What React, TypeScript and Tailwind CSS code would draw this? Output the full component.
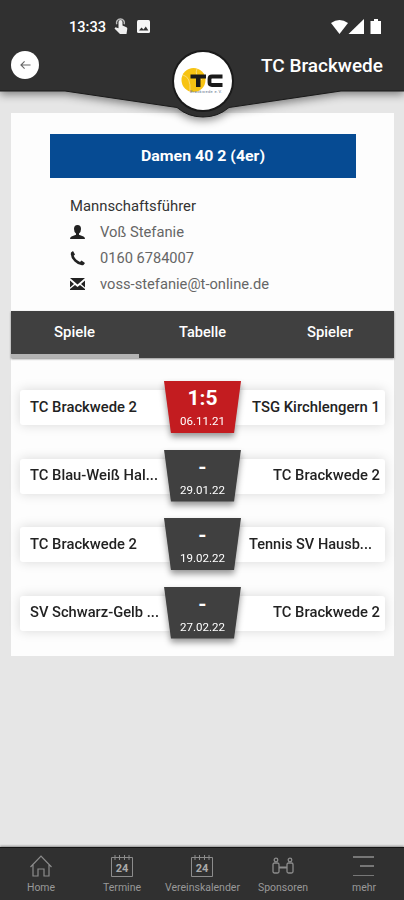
import React from "react";

const FONT = "font-['Roboto','Liberation_Sans',sans-serif]";

type Match = {
  home: string;
  guest: string;
  score: string;
  date: string;
  lost?: boolean;
};

const matches: Match[] = [
  { home: "TC Brackwede 2", guest: "TSG Kirchlengern 1", score: "1:5", date: "06.11.21", lost: true },
  { home: "TC Blau-Weiß Hal...", guest: "TC Brackwede 2", score: "-", date: "29.01.22" },
  { home: "TC Brackwede 2", guest: "Tennis SV Hausb...", score: "-", date: "19.02.22" },
  { home: "SV Schwarz-Gelb ...", guest: "TC Brackwede 2", score: "-", date: "27.02.22" },
];

const StatusBar: React.FC = () => (
  <div className="flex h-[46px] items-center justify-between pl-[69px] pr-[22px] pt-[7px]">
    <div className="flex items-center">
      <span className="w-[37px] whitespace-nowrap text-[15.5px] font-medium leading-5 text-white">
        <svg width="37" height="20" className="block overflow-visible" fill="#fff">
          <text x="0" y="15" textLength="37" lengthAdjust="spacingAndGlyphs">13:33</text>
        </svg>
      </span>
      <svg className="ml-[8px]" width="14" height="17" viewBox="0 0 14 17" fill="#eee">
        <path d="M4.500 4a2 2 0 0 1 4 0V7.500l4 1.700q1 .5.8 1.500l-.8 5.300H6L.5 10.500l1-1.300 3 1z" />
        <path d="M2.700 6.300a4 4 0 1 1 7.500 0" fill="none" stroke="#bbb" strokeWidth="1.500" />
      </svg>
      <svg className="ml-[9px]" width="13" height="13" viewBox="0 0 13 13">
        <rect width="13" height="13" rx="1.5" fill="#f5f5f5" />
        <path d="M2 10.500l2.500-3 2 2 2.300-3 2.600 4z" fill="#303030" />
      </svg>
    </div>
    <svg width="51" height="16" viewBox="0 0 51 16" fill="#fff">
      <path d="M0 4Q8.500-2 17 4L8.500 15z" />
      <path d="M33 0v15H17.500z" />
      <path d="M43 0h4v2h3v13H39.500V2H43z" />
    </svg>
  </div>
);

const Logo: React.FC = () => (
  <svg width="58" height="58" viewBox="0 0 58 58" className="block">
    <circle cx="29" cy="29" r="29" fill="#fff" />
    <circle cx="19.500" cy="28" r="12" fill="#f7c312" />
    <path d="M9 23q8 2 7 16M23 17q-3 6 5 11" fill="none" stroke="#fbdc77" strokeWidth="1" />
    <path d="M16.500 22.500H32v4h-5.500V35h-4.500v-8.500h-5.500z" fill="#1a1a1a" />
    <path d="M48.500 24.500H38q-2.500 0-2.500 2.500v3.500q0 2.500 2.500 2.500h10.500" fill="none" stroke="#1a1a1a" strokeWidth="3.800" />
    <text x="16" y="41" fontSize="4" textLength="32" fill="#64748b">Brackwede e.V.</text>
  </svg>
);

const Header: React.FC = () => (
  <header className="relative h-[91px] bg-[#303030]">
    <svg
      className="absolute left-0 top-[91px] overflow-visible drop-shadow-[0_3px_4px_rgba(0,0,0,0.45)]"
      width="404"
      height="30"
      viewBox="0 0 404 30"
      fill="#303030"
    >
      <path d="M0-91H404V0H341L229 16.500Q218 26 203 26T177 16.500L65 0H0z" />
      <path d="M0 0H65L177 16.500Q188 26 203 26T229 16.500L341 0H404" fill="none" stroke="#1a1a1a" />
    </svg>
    <div className="relative">
      <StatusBar />
      <div className="flex h-[38px] items-center justify-between pl-[11px] pr-[21px]">
        <button className="flex h-[28px] w-[28px] items-center justify-center rounded-full bg-white">
          <svg width="11" height="10" viewBox="0 0 12 10" fill="none" stroke="#666" strokeWidth="1.200">
            <path d="M11.500 5H1M5 1L1 5l4 4" />
          </svg>
        </button>
        <svg width="122" height="24" className="mt-[2px] overflow-visible text-[18px] font-medium" fill="#fff">
          <text x="0" y="18" textLength="122" lengthAdjust="spacingAndGlyphs">TC Brackwede</text>
        </svg>
      </div>
    </div>
    <div className="absolute left-[174px] top-[52px] rounded-full shadow-[0_0_0_2px_#1a1a1a]">
      <Logo />
    </div>
  </header>
);

type LineProps = {
  text: string;
  width: number;
  className: string;
};

// single line of text with a fixed advance width
const Line: React.FC<LineProps> = ({ text, width, className }) => (
  <svg width={width} height="20" className={`block shrink-0 overflow-visible ${className}`} fill="currentColor">
    <text x="0" y="15" textLength={width} lengthAdjust="spacingAndGlyphs">
      {text}
    </text>
  </svg>
);

const Contact: React.FC = () => (
  <section className="flex flex-col pl-[59px] pt-[18px]">
    <Line text="Mannschaftsführer" width={126} className="text-[14px] text-[#333]" />
    <div className="mt-[6px] flex h-[20px] items-center">
      <svg width="15" height="15" viewBox="0 0 15 15" fill="#222">
        <path d="M7.500 0Q11 0 11 4 11 7 9 8.500v1.200L13.500 11.500Q15 12 15 14H0q0-2 1.500-2.500L6 9.700V8.500Q4 7 4 4 4 0 7.500 0z" />
      </svg>
      <div className="ml-[15px]">
        <Line text="Voß Stefanie" width={84} className="text-[14px] text-[#666]" />
      </div>
    </div>
    <div className="mt-[6px] flex h-[20px] items-center">
      <svg width="15" height="15" viewBox="0 0 15 15" fill="#222">
        <path d="M1 1.500L3 0l2 3.500-1.300 1.300Q5.500 9 10 11l1.500-1.500L15 12l-1.500 2Q9 15 4.500 10.500 0 6 1 1.500z" />
      </svg>
      <div className="ml-[15px]">
        <Line text="0160 6784007" width={94} className="text-[14px] text-[#666]" />
      </div>
    </div>
    <div className="mt-[6px] flex h-[20px] items-center">
      <svg width="15" height="12" viewBox="0 0 15 12" fill="#222">
        <path d="M0 0h15L7.500 6.500zM0 2.500L4 6 0 9.500zM15 2.500L11 6l4 3.500zM0 12v-1l5-4 2.500 2L10 7l5 4v1z" />
      </svg>
      <div className="ml-[15px]">
        <Line text="voss-stefanie@t-online.de" width={169} className="text-[14px] text-[#666]" />
      </div>
    </div>
  </section>
);

const Tabs: React.FC = () => (
  <nav className="grid h-[47px] grid-cols-3 bg-[#404040] text-[14px] font-medium text-white shadow-[0_1px_2px_rgba(0,0,0,0.45)]">
    <div className="flex justify-center border-b-4 border-[#b3b3b3] pt-[11px]">
      <Line text="Spiele" width={41} className="" />
    </div>
    <div className="flex justify-center pt-[11px]">
      <Line text="Tabelle" width={47} className="" />
    </div>
    <div className="flex justify-center pt-[11px]">
      <Line text="Spieler" width={46} className="" />
    </div>
  </nav>
);

const homeWidths = [107, 128, 107, 129];
const guestWidths = [128, 107, 123, 107];

const MatchRow: React.FC<{ match: Match; index: number }> = ({ match, index }) => (
  <div className="relative h-[68.500px] px-[9px] pt-[9px]">
    <div className="flex h-[35px] items-center justify-between rounded-[3px] bg-white pb-[2px] pl-[10px] pr-[5px] text-[14px] font-medium text-[#222] shadow-[0_0_12px_rgba(0,0,0,0.15)]">
      <Line text={match.home} width={homeWidths[index]} className="" />
      <div className={index === 2 ? "pr-[8px]" : ""}>
        <Line text={match.guest} width={guestWidths[index]} className="" />
      </div>
    </div>
    <div className="absolute left-[153px] top-0 h-[52px] w-[77px] drop-shadow-[0_4px_3px_rgba(0,0,0,0.4)]">
      <div
        className={`flex h-full flex-col items-center text-white [clip-path:polygon(0_0,100%_0,91%_100%,9%_100%)] ${
          match.lost ? "bg-[#c31c20]" : "bg-[#404040]"
        }`}
      >
        <span className="h-[31px] pt-[4px] text-[21px] font-bold leading-[27px]">{match.score}</span>
        <Line text={match.date} width={45} className="-mt-[2px] text-[11px]" />
      </div>
    </div>
  </div>
);

const CalendarIcon: React.FC = () => (
  <svg width="22" height="22" viewBox="0 0 22 22" fill="none" stroke="#8c8c8c">
    <path d="M.500 2.500h21v19H.500zM4 0v5M8.500 0v5M13.500 0v5M18 0v5" />
    <text x="11" y="17" textAnchor="middle" fontSize="11" fontWeight="700" fill="#aaa" stroke="none">
      24
    </text>
  </svg>
);

const NavItem: React.FC<{ label: string; width: number; children: React.ReactNode }> = ({ label, width, children }) => (
  <div className="flex flex-1 flex-col items-center pt-[7px]">
    <div className="h-[21px]">{children}</div>
    <Line text={label} width={width} className="text-[10px] text-[#999]" />
  </div>
);

const BottomNav: React.FC = () => (
  <nav className="flex h-[53px] border-t border-[#151515] bg-[#303030] pl-px shadow-[0_-1px_2px_rgba(0,0,0,0.4)]">
    <NavItem label="Home" width={28}>
      <svg width="22" height="22" viewBox="0 0 22 22" fill="none" stroke="#8c8c8c" strokeWidth="1.200">
        <path d="M.500 12L11 1l10.500 11M3 10v11h5v-7h6v7h5V10" />
      </svg>
    </NavItem>
    <NavItem label="Termine" width={38}>
      <CalendarIcon />
    </NavItem>
    <NavItem label="Vereinskalender" width={75}>
      <CalendarIcon />
    </NavItem>
    <NavItem label="Sponsoren" width={50}>
      <svg width="22" height="22" viewBox="0 0 22 22" fill="none" stroke="#8c8c8c" strokeWidth="1.300">
        <circle cx="4" cy="5" r="1.800" />
        <circle cx="18" cy="5" r="1.800" />
        <rect x="1" y="8" width="6" height="10" rx="1.500" />
        <rect x="15" y="8" width="6" height="10" rx="1.500" />
        <path d="M7 12.500h8" strokeWidth="2" />
      </svg>
    </NavItem>
    <NavItem label="mehr" width={24}>
      <svg width="22" height="22" viewBox="0 0 22 22" fill="none" stroke="#777">
        <path d="M0 2h21M7 11h14" strokeWidth="2" />
        <path d="M0 20.500h21" />
      </svg>
    </NavItem>
  </nav>
);

const App: React.FC = () => {
  return (
    <div className={`flex h-[900px] w-[404px] flex-col overflow-hidden bg-[#e6e6e6] ${FONT}`}>
      <Header />
      <main className="flex-1 pl-[11px] pr-[10px] pt-[22px]">
        <div className="h-[543px] bg-[#fdfdfd]">
          <div className="h-[198px] pt-[21px]">
            <div className="ml-[39px] flex h-[44px] w-[306px] items-center justify-center bg-[#064b93] text-[14px] font-bold text-white">
              <Line text="Damen 40 2 (4er)" width={124} className="" />
            </div>
            <Contact />
          </div>
          <Tabs />
          <div className="pt-[23px]">
            {matches.map((match, index) => (
              <MatchRow key={match.date} match={match} index={index} />
            ))}
          </div>
        </div>
      </main>
      <BottomNav />
    </div>
  );
};

export default App;
